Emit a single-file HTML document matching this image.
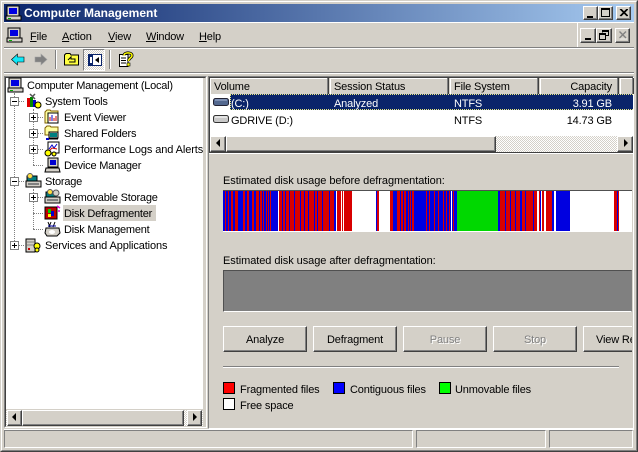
<!DOCTYPE html>
<html><head><meta charset="utf-8"><style>
html,body{margin:0;padding:0;background:#d4d0c8}
#w{position:relative;width:638px;height:452px;overflow:hidden;background:#d4d0c8;font:11px "Liberation Sans",sans-serif;color:#000}
#w div,#w svg{position:absolute}
.t{white-space:nowrap;line-height:13px;height:13px;letter-spacing:-.15px}
.tr{letter-spacing:-.21px}
.b{background:#d4d0c8;box-sizing:border-box;border:1px solid;border-color:#fff #404040 #404040 #fff;box-shadow:inset -1px -1px 0 #808080}
.btn{top:326px;height:26px;width:84px;text-align:center;line-height:26px;white-space:nowrap;overflow:hidden;letter-spacing:-.15px}
.dis{color:#808080;text-shadow:1px 1px 0 #fff}
.hd{top:78px;height:16px;background:#d4d0c8;box-sizing:border-box;border-right:1px solid #808080;box-shadow:inset 1px 1px 0 #fff,1px 0 0 #404040}
.ex{width:9px;height:9px;box-sizing:border-box;border:1px solid #808080;background:#fff}
.ex:after{content:"";position:absolute;left:1px;top:3px;width:5px;height:1px;background:#000}
.pl:before{content:"";position:absolute;left:3px;top:1px;width:1px;height:5px;background:#000}
.sw{width:12px;height:12px;box-sizing:border-box;border:1px solid #000}
.sb{background:repeating-conic-gradient(#fff 0 25%,#d4d0c8 0 50%) 0 0/2px 2px}
u{text-decoration:underline}
</style></head><body><div id="w">
<!-- window frame -->
<div style="left:0;top:0;width:638px;height:452px;box-sizing:border-box;border:1px solid;border-color:#d4d0c8 #404040 #404040 #d4d0c8"></div>
<div style="left:1px;top:1px;width:636px;height:450px;box-sizing:border-box;border:1px solid;border-color:#fff #808080 #808080 #fff"></div>
<!-- title -->
<div style="left:4px;top:4px;width:630px;height:18px;background:linear-gradient(90deg,#0a246a,#a6caf0)"></div>
<svg style="left:5px;top:5px" width="17" height="16" viewBox="0 0 17 16"><rect x="2" y="1" width="12" height="10" fill="#d4d0c8" stroke="#000"/><rect x="4" y="3" width="8" height="6" fill="#0000e0"/><rect x="1" y="11" width="15" height="4" fill="#d4d0c8" stroke="#000"/><rect x="3" y="13" width="3" height="1" fill="#0a0"/></svg>
<div class="t" style="left:24px;top:6px;color:#fff;font-weight:bold;font-size:12px;letter-spacing:0;line-height:15px;height:15px">Computer Management</div>
<div class="b" style="left:583px;top:6px;width:15px;height:14px"></div><div style="left:587px;top:16px;width:6px;height:2px;background:#000"></div>
<div class="b" style="left:598px;top:6px;width:15px;height:14px"></div><div style="left:601px;top:8px;width:9px;height:9px;box-sizing:border-box;border:1px solid #000;border-top-width:2px"></div>
<div class="b" style="left:616px;top:6px;width:15px;height:14px"></div>
<svg style="left:619px;top:9px" width="9" height="8"><path d="M1 0L8 7M2 0L9 7M8 0L1 7M9 0L2 7" stroke="#000" fill="none"/></svg>
<!-- menu -->
<div style="left:4px;top:22px;width:630px;height:1px;background:#fff"></div>
<div style="left:4px;top:47px;width:630px;height:1px;background:#808080"></div>
<div style="left:4px;top:48px;width:630px;height:1px;background:#fff"></div>
<div style="left:577px;top:23px;width:1px;height:24px;background:#fff"></div>
<svg style="left:6px;top:27px" width="17" height="17" viewBox="0 0 17 17"><rect x="2" y="1" width="12" height="10" fill="#d4d0c8" stroke="#000"/><rect x="4" y="3" width="8" height="6" fill="#0000e0"/><rect x="1" y="11" width="15" height="4" fill="#d4d0c8" stroke="#000"/><rect x="3" y="13" width="3" height="1" fill="#0a0"/></svg>
<div class="t" style="left:30px;top:31px"><u>F</u>ile</div>
<div class="t" style="left:62px;top:31px"><u>A</u>ction</div>
<div class="t" style="left:108px;top:31px"><u>V</u>iew</div>
<div class="t" style="left:146px;top:31px;letter-spacing:-.2px"><u>W</u>indow</div>
<div class="t" style="left:199px;top:31px"><u>H</u>elp</div>
<div class="b" style="left:580px;top:28px;width:16px;height:15px"></div><div style="left:585px;top:38px;width:6px;height:2px;background:#000"></div>
<div class="b" style="left:596px;top:28px;width:16px;height:15px"></div>
<svg style="left:599px;top:30px" width="10" height="10"><path d="M3.500 2.500V.5H9.500V5.500H7M3 1.500H9" stroke="#000" fill="none"/><rect x=".5" y="3.500" width="6" height="6" fill="none" stroke="#000"/><path d="M0 4.500H7" stroke="#000"/></svg>
<div class="b" style="left:615px;top:28px;width:15px;height:15px"></div>
<svg style="left:618px;top:31px" width="10" height="9"><path d="M1.500 .5L8 7M8 .5L1.500 7" stroke="#808080" stroke-width="1.400" fill="none"/><path d="M2 8L9 8" stroke="#fff" opacity=".6"/></svg>
<!-- toolbar -->
<svg style="left:11px;top:53px" width="14" height="13" viewBox="0 0 14 13"><path d="M.5 6.500L6.500 1V4H13V9H6.500V12Z" fill="#10e8f8" stroke="#000" stroke-width=".6"/></svg>
<svg style="left:34px;top:53px" width="14" height="13" viewBox="0 0 14 13"><path d="M13 6.500L7 1V4H1V9H7V12Z" fill="#808080" stroke="#a0a0a0" stroke-width=".6"/></svg>
<div style="left:55px;top:50px;width:1px;height:19px;background:#808080"></div><div style="left:56px;top:50px;width:1px;height:19px;background:#fff"></div>
<svg style="left:64px;top:52px" width="15" height="14" viewBox="0 0 15 14"><path d="M.5 13V3L2 1.500H6L7 3H14.500V13Z" fill="#ffff40" stroke="#000"/><path d="M4 8L7 5V7H11V10H5" fill="none" stroke="#000"/></svg>
<div style="left:83px;top:49px;width:22px;height:22px;box-sizing:border-box;border:1px solid;border-color:#808080 #fff #fff #808080;background:repeating-conic-gradient(#fff 0 25%,#d4d0c8 0 50%) 0 0/2px 2px"></div>
<svg style="left:88px;top:54px" width="14" height="12" viewBox="0 0 14 12"><rect x=".5" y=".5" width="13" height="11" fill="#fff" stroke="#0a246a"/><rect x="0" y="0" width="5" height="12" fill="#0a246a"/><rect x="2" y="3" width="2" height="6" fill="#fff"/><path d="M11 3V9L7 6Z" fill="#000"/></svg>
<div style="left:109px;top:50px;width:1px;height:19px;background:#808080"></div><div style="left:110px;top:50px;width:1px;height:19px;background:#fff"></div>
<svg style="left:118px;top:51px" width="16" height="17" viewBox="0 0 16 17"><path d="M1.500 3.500H10V15.500H1.500Z" fill="#fff" stroke="#000"/><path d="M3 7H8M3 9.500H8M3 12H8" stroke="#000"/><path d="M6 4.500C6 1 14 1 14 4.500C14 7 10.500 7 10.500 10" fill="none" stroke="#000" stroke-width="3"/><path d="M6 4.500C6 1 14 1 14 4.500C14 7 10.500 7 10.500 10" fill="none" stroke="#ff0" stroke-width="1.500"/><rect x="9" y="12" width="3" height="3" fill="#ff0" stroke="#000" stroke-width=".6"/></svg>
<div style="left:4px;top:72px;width:630px;height:1px;background:#808080"></div>
<div style="left:4px;top:73px;width:630px;height:1px;background:#fff"></div>

<!-- tree pane -->
<div style="left:4px;top:76px;width:203px;height:352px;box-sizing:border-box;border:1px solid;border-color:#808080 #fff #fff #808080"></div>
<div style="left:5px;top:77px;width:201px;height:350px;box-sizing:border-box;border:1px solid;border-color:#404040 #d4d0c8 #d4d0c8 #404040"></div>
<div style="left:6px;top:78px;width:197px;height:331px;background:#fff"></div>
<!-- dotted -->
<div style="left:14px;top:93px;height:152px;border-left:1px dotted #808080"></div>
<div style="left:33px;top:109px;height:56px;border-left:1px dotted #808080"></div>
<div style="left:33px;top:189px;height:40px;border-left:1px dotted #808080"></div>
<div style="left:14px;top:101px;width:10px;border-top:1px dotted #808080"></div>
<div style="left:14px;top:181px;width:10px;border-top:1px dotted #808080"></div>
<div style="left:14px;top:245px;width:10px;border-top:1px dotted #808080"></div>
<div style="left:33px;top:117px;width:10px;border-top:1px dotted #808080"></div>
<div style="left:33px;top:133px;width:10px;border-top:1px dotted #808080"></div>
<div style="left:33px;top:149px;width:10px;border-top:1px dotted #808080"></div>
<div style="left:33px;top:165px;width:10px;border-top:1px dotted #808080"></div>
<div style="left:33px;top:197px;width:10px;border-top:1px dotted #808080"></div>
<div style="left:33px;top:213px;width:10px;border-top:1px dotted #808080"></div>
<div style="left:33px;top:229px;width:10px;border-top:1px dotted #808080"></div>
<!-- expanders -->
<div class="ex" style="left:10px;top:97px"></div>
<div class="ex pl" style="left:29px;top:113px"></div>
<div class="ex pl" style="left:29px;top:129px"></div>
<div class="ex pl" style="left:29px;top:145px"></div>
<div class="ex" style="left:10px;top:177px"></div>
<div class="ex pl" style="left:29px;top:193px"></div>
<div class="ex pl" style="left:10px;top:241px"></div>
<!-- tree icons -->
<svg style="left:7px;top:77px" width="17" height="16" viewBox="0 0 17 16"><rect x="2" y="1" width="12" height="10" fill="#d4d0c8" stroke="#000"/><rect x="4" y="3" width="8" height="6" fill="#0000e0"/><rect x="1" y="11" width="15" height="4" fill="#d4d0c8" stroke="#000"/><rect x="3" y="13" width="3" height="1" fill="#0a0"/></svg>
<svg style="left:26px;top:93px" width="16" height="16" viewBox="0 0 16 16"><rect x="1" y="5" width="3" height="9" fill="#d00"/><rect x="4" y="4" width="3" height="10" fill="#080"/><rect x="7" y="7" width="3" height="7" fill="#00c"/><path d="M4 1L9 6M9 1L6 4" stroke="#555" stroke-width="1.500"/><circle cx="12" cy="12" r="3" fill="#ff0" stroke="#000"/></svg>
<svg style="left:44px;top:109px" width="16" height="16" viewBox="0 0 16 16"><path d="M1 14V3L3 1H6L7 2H14V14Z" fill="#ffffa0" stroke="#806000"/><rect x="4" y="4" width="10" height="10" fill="#fff" stroke="#000"/><path d="M6 12V8M8 12V6M10 12V9M12 12V7" stroke="#c00"/><path d="M8 12V6" stroke="#00c"/></svg>
<svg style="left:44px;top:125px" width="16" height="16" viewBox="0 0 16 16"><path d="M1 10V3L3 1H6L7 2H14V10Z" fill="#ffffa0" stroke="#806000"/><rect x="5" y="7" width="9" height="6" fill="#d4d0c8" stroke="#000"/><rect x="6" y="8" width="7" height="4" fill="#008080"/><rect x="2" y="13" width="3" height="2" fill="#00c"/><path d="M5 14H14" stroke="#000"/></svg>
<svg style="left:44px;top:141px" width="16" height="16" viewBox="0 0 16 16"><rect x="4" y="1" width="11" height="11" fill="#fff" stroke="#000"/><path d="M5 8L8 4L10 7L13 3" fill="none" stroke="#00c"/><path d="M5 10L8 7L13 8" fill="none" stroke="#c00"/><circle cx="4" cy="12" r="3" fill="#ff0" stroke="#000"/><circle cx="10" cy="13" r="2" fill="#ff0" stroke="#000"/></svg>
<svg style="left:44px;top:157px" width="17" height="16" viewBox="0 0 17 16"><rect x="4" y="1" width="10" height="9" fill="#d4d0c8" stroke="#000"/><rect x="6" y="3" width="6" height="5" fill="#0000d0"/><path d="M2 11H15L16 15H1Z" fill="#d4d0c8" stroke="#000"/></svg>
<svg style="left:25px;top:173px" width="17" height="16" viewBox="0 0 17 16"><rect x="2" y="3" width="10" height="5" fill="#008080" stroke="#000"/><circle cx="5" cy="3" r="2.500" fill="#ffe040" stroke="#555"/><path d="M1 8H16V14H1Z" fill="#d4d0c8" stroke="#000"/><rect x="3" y="10" width="11" height="2" fill="#808080"/></svg>
<svg style="left:44px;top:189px" width="17" height="16" viewBox="0 0 17 16"><rect x="2" y="3" width="10" height="5" fill="#008080" stroke="#000"/><circle cx="6" cy="3" r="2.500" fill="#ffe040" stroke="#555"/><circle cx="12" cy="4" r="3" fill="#d4d0c8" stroke="#555"/><path d="M1 8H16V14H1Z" fill="#d4d0c8" stroke="#000"/><rect x="3" y="10" width="11" height="2" fill="#808080"/></svg>
<svg style="left:44px;top:205px" width="17" height="16" viewBox="0 0 17 16"><rect x="1" y="2" width="12" height="12" fill="#c00000" stroke="#000"/><rect x="4" y="4" width="3" height="4" fill="#00d000"/><rect x="7" y="6" width="3" height="5" fill="#0000d0"/><rect x="4" y="9" width="3" height="3" fill="#ffff00"/><path d="M13 1L16 3M14 6L16 6" stroke="#e000e0" stroke-width="1.500"/></svg>
<svg style="left:44px;top:221px" width="17" height="16" viewBox="0 0 17 16"><path d="M2 7H15L16 12L13 15H3L1 12Z" fill="#d4d0c8" stroke="#000"/><path d="M4 1L6 6M7 1L5 6M11 1L9 6" stroke="#000"/><ellipse cx="8" cy="11" rx="3" ry="2" fill="#fff"/><path d="M4 5H12" stroke="#00a"/></svg>
<svg style="left:25px;top:237px" width="17" height="16" viewBox="0 0 17 16"><rect x="1" y="2" width="9" height="13" fill="#d4d0c8" stroke="#000"/><path d="M2 5H9M2 8H9" stroke="#808080"/><rect x="3" y="11" width="2" height="2" fill="#c00"/><circle cx="12" cy="9" r="3" fill="#ff0" stroke="#000"/><circle cx="12" cy="13" r="2" fill="#ff0" stroke="#000"/></svg>
<!-- tree labels -->
<div class="t tr" style="left:27px;top:80px;letter-spacing:-.24px">Computer Management (Local)</div>
<div class="t tr" style="left:45px;top:96px">System Tools</div>
<div class="t tr" style="left:64px;top:112px">Event Viewer</div>
<div class="t tr" style="left:64px;top:128px">Shared Folders</div>
<div class="t tr" style="left:64px;top:144px;letter-spacing:-.1px">Performance Logs and Alerts</div>
<div class="t tr" style="left:64px;top:160px">Device Manager</div>
<div class="t tr" style="left:45px;top:176px">Storage</div>
<div class="t tr" style="left:64px;top:192px">Removable Storage</div>
<div style="left:63px;top:205px;width:93px;height:16px;background:#d4d0c8"></div>
<div class="t tr" style="left:64px;top:208px">Disk Defragmenter</div>
<div class="t tr" style="left:64px;top:224px">Disk Management</div>
<div class="t tr" style="left:45px;top:240px;letter-spacing:-.12px">Services and Applications</div>
<!-- tree scrollbar -->
<div class="sb" style="left:6px;top:410px;width:197px;height:16px"></div>
<div class="b" style="left:7px;top:410px;width:15px;height:16px"></div><svg style="left:10px;top:413px" width="8" height="9"><path d="M6 0V8L2 4Z" fill="#000"/></svg>
<div class="b" style="left:22px;top:410px;width:162px;height:16px"></div>
<div class="b" style="left:187px;top:410px;width:15px;height:16px"></div><svg style="left:191px;top:413px" width="8" height="9"><path d="M2 0V8L6 4Z" fill="#000"/></svg>
<div style="left:203px;top:78px;width:2px;height:348px;background:#d4d0c8"></div>

<!-- right pane -->
<div style="left:208px;top:76px;width:426px;height:353px;box-sizing:border-box;border:1px solid;border-color:#808080 #fff #fff #808080"></div>
<div style="left:209px;top:77px;width:424px;height:1px;background:#404040"></div>
<div style="left:209px;top:77px;width:1px;height:75px;background:#404040"></div>
<div style="left:210px;top:94px;width:423px;height:42px;background:#fff"></div>
<div class="hd" style="left:210px;width:118px"></div>
<div class="hd" style="left:330px;width:118px"></div>
<div class="hd" style="left:450px;width:88px"></div>
<div class="hd" style="left:540px;width:78px"></div>
<div class="hd" style="left:620px;width:13px"></div>
<div class="t" style="left:214px;top:81px">Volume</div>
<div class="t" style="left:334px;top:81px">Session Status</div>
<div class="t" style="left:454px;top:81px">File System</div>
<div class="t" style="left:552px;top:81px;width:60px;text-align:right">Capacity</div>
<div style="left:230px;top:94px;width:403px;height:16px;background:#0a246a"></div>
<div style="left:230px;top:94px;width:403px;height:16px;box-sizing:border-box;border:1px dotted #e8e880;border-right:0"></div>
<svg style="left:213px;top:97px" width="17" height="10"><rect x=".5" y="1.500" width="15" height="7" rx="2" fill="#53688f" stroke="#223"/><path d="M2 3H14" stroke="#a8b8d8"/></svg>
<svg style="left:213px;top:114px" width="17" height="10"><rect x=".5" y="1.500" width="15" height="7" rx="2" fill="#c8c8c8" stroke="#333"/><path d="M2 3H14" stroke="#fff"/></svg>
<div class="t" style="left:231px;top:98px;color:#fff">(C:)</div>
<div class="t" style="left:334px;top:98px;color:#fff">Analyzed</div>
<div class="t" style="left:454px;top:98px;color:#fff">NTFS</div>
<div class="t" style="left:552px;top:98px;color:#fff;width:60px;text-align:right">3.91 GB</div>
<div class="t" style="left:231px;top:115px">GDRIVE (D:)</div>
<div class="t" style="left:454px;top:115px">NTFS</div>
<div class="t" style="left:552px;top:115px;width:60px;text-align:right">14.73 GB</div>
<!-- list scrollbar -->
<div class="sb" style="left:210px;top:136px;width:423px;height:16px"></div>
<div class="b" style="left:210px;top:136px;width:16px;height:16px"></div><svg style="left:214px;top:139px" width="8" height="9"><path d="M6 0V8L2 4Z" fill="#000"/></svg>
<div class="b" style="left:226px;top:136px;width:270px;height:16px"></div>
<div class="b" style="left:617px;top:136px;width:16px;height:16px"></div><svg style="left:622px;top:139px" width="8" height="9"><path d="M2 0V8L6 4Z" fill="#000"/></svg>
<div style="left:209px;top:152px;width:424px;height:1px;background:#404040"></div>
<div style="left:209px;top:153px;width:424px;height:1px;background:#fff"></div>
<div class="t" style="left:223px;top:175px;letter-spacing:-.06px">Estimated disk usage before defragmentation:</div>
<!-- before bar -->
<svg style="left:223px;top:190px" width="409" height="42" shape-rendering="crispEdges"><g transform="translate(-223,0)">
<rect x="223" y="0" width="409" height="42" fill="#fff"/>
<rect x="223" y="0" width="111" height="41" fill="#0000e0"/>
<g fill="#d80000"><rect x="225" y="0" width="1" height="41"/><rect x="228" y="0" width="1" height="41"/><rect x="231" y="0" width="2" height="41"/><rect x="235" y="0" width="3" height="41"/><rect x="243" y="0" width="2" height="41"/><rect x="247" y="0" width="2" height="41"/><rect x="252" y="0" width="2" height="41"/><rect x="256" y="0" width="3" height="41"/><rect x="260" y="0" width="2" height="41"/><rect x="263" y="0" width="1" height="41"/><rect x="266" y="0" width="1" height="41"/><rect x="268" y="0" width="1" height="41"/><rect x="270" y="0" width="1" height="41"/>
<rect x="279" y="0" width="55" height="41"/></g>
<rect x="278" y="0" width="1" height="41" fill="#fff"/>
<g fill="#0000e0"><rect x="282" y="0" width="1" height="41"/><rect x="285" y="0" width="1" height="41"/><rect x="289" y="0" width="1" height="41"/><rect x="294" y="0" width="1" height="41"/><rect x="300" y="0" width="1" height="41"/><rect x="304" y="0" width="1" height="41"/><rect x="308" y="0" width="1" height="41"/><rect x="314" y="0" width="1" height="41"/><rect x="317" y="0" width="1" height="41"/><rect x="322" y="0" width="1" height="41"/><rect x="329" y="0" width="1" height="41"/><rect x="334" y="0" width="2" height="41"/></g>
<g fill="#d80000"><rect x="337" y="0" width="4" height="41"/><rect x="342" y="0" width="1" height="41"/><rect x="344" y="0" width="8" height="41"/><rect x="377" y="0" width="2" height="41"/><rect x="390" y="0" width="3" height="41"/></g>
<rect x="376" y="0" width="1" height="41" fill="#0000e0"/>
<rect x="393" y="0" width="58" height="41" fill="#0000e0"/>
<g fill="#d80000"><rect x="397" y="0" width="3" height="41"/><rect x="401" y="0" width="2" height="41"/><rect x="404" y="0" width="2" height="41"/><rect x="408" y="0" width="1" height="41"/><rect x="410" y="0" width="1" height="41"/><rect x="412" y="0" width="2" height="41"/><rect x="426" y="0" width="1" height="41"/><rect x="429" y="0" width="1" height="41"/><rect x="434" y="0" width="1" height="41"/><rect x="438" y="0" width="1" height="41"/><rect x="443" y="0" width="1" height="41"/><rect x="446" y="0" width="1" height="41"/><rect x="449" y="0" width="1" height="41"/></g>
<rect x="451" y="0" width="1" height="41" fill="#fff"/>
<rect x="452" y="0" width="5" height="41" fill="#0000e0"/><rect x="453" y="0" width="1" height="41" fill="#d80000"/>
<rect x="457" y="0" width="41" height="41" fill="#00d800"/>
<rect x="498" y="0" width="2" height="41" fill="#0000e0"/>
<rect x="500" y="0" width="40" height="41" fill="#d80000"/>
<g fill="#0000e0"><rect x="505" y="0" width="1" height="41"/><rect x="510" y="0" width="1" height="41"/><rect x="515" y="0" width="1" height="41"/><rect x="520" y="0" width="2" height="41"/><rect x="525" y="0" width="1" height="41"/><rect x="533" y="0" width="1" height="41"/><rect x="540" y="0" width="1" height="41"/></g>
<rect x="537" y="0" width="2" height="41" fill="#fff"/>
<rect x="541" y="0" width="1" height="41" fill="#fff"/><rect x="542" y="0" width="2" height="41" fill="#d80000"/>
<rect x="544" y="0" width="2" height="41" fill="#fff"/>
<rect x="546" y="0" width="6" height="41" fill="#d80000"/><rect x="552" y="0" width="2" height="41" fill="#0000e0"/>
<rect x="554" y="0" width="2" height="41" fill="#fff"/>
<rect x="556" y="0" width="14" height="41" fill="#0000e0"/>
<rect x="614" y="0" width="3" height="41" fill="#d80000"/><rect x="617" y="0" width="1" height="41" fill="#0000e0"/><rect x="618" y="0" width="1" height="41" fill="#d80000"/>
<rect x="223" y="0" width="409" height="1" fill="#505050"/>
</g></svg>
<div class="t" style="left:223px;top:255px;letter-spacing:-.06px">Estimated disk usage after defragmentation:</div>
<div style="left:223px;top:270px;width:409px;height:42px;box-sizing:border-box;background:#808080;border:1px solid;border-color:#505050 #808080 #fff #505050"></div>
<!-- buttons -->
<div class="b btn" style="left:223px">Analyze</div>
<div class="b btn" style="left:313px">Defragment</div>
<div class="b btn dis" style="left:403px">Pause</div>
<div class="b btn dis" style="left:493px">Stop</div>
<div style="left:583px;top:326px;width:49px;height:26px;overflow:hidden"><div class="b btn" style="left:0;top:0">View Report</div></div>
<div style="left:223px;top:366px;width:396px;height:1px;background:#808080"></div>
<div style="left:223px;top:367px;width:396px;height:1px;background:#fff"></div>
<!-- legend -->
<div class="sw" style="left:223px;top:382px;background:#f00"></div>
<div class="t" style="left:240px;top:384px">Fragmented files</div>
<div class="sw" style="left:333px;top:382px;background:#00f"></div>
<div class="t" style="left:350px;top:384px">Contiguous files</div>
<div class="sw" style="left:439px;top:382px;background:#0f0"></div>
<div class="t" style="left:455px;top:384px">Unmovable files</div>
<div class="sw" style="left:223px;top:398px;background:#fff"></div>
<div class="t" style="left:240px;top:400px">Free space</div>
<!-- status bar -->
<div style="left:4px;top:429px;width:630px;height:1px;background:#fff"></div>
<div style="left:4px;top:430px;width:409px;height:18px;box-sizing:border-box;border:1px solid;border-color:#808080 #fff #fff #808080"></div>
<div style="left:416px;top:430px;width:130px;height:18px;box-sizing:border-box;border:1px solid;border-color:#808080 #fff #fff #808080"></div>
<div style="left:549px;top:430px;width:84px;height:18px;box-sizing:border-box;border:1px solid;border-color:#808080 #fff #fff #808080"></div>
</div></body></html>
